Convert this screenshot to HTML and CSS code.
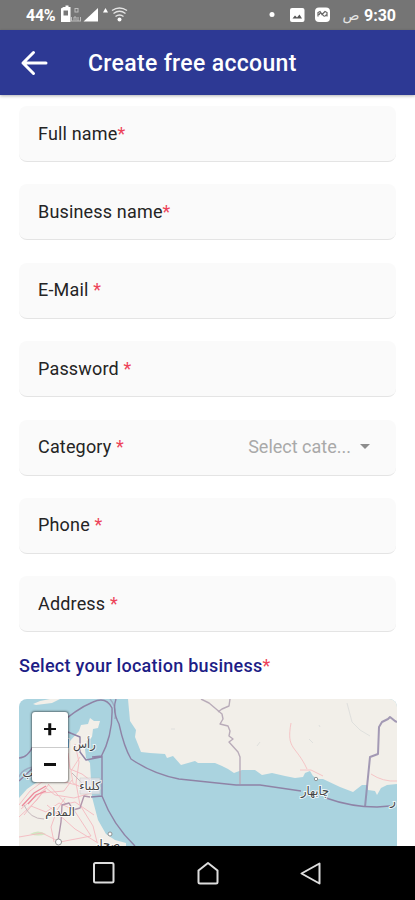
FILE: index.html
```html
<!DOCTYPE html>
<html lang="en">
<head>
<meta charset="utf-8">
<title>Create free account</title>
<link rel="stylesheet" href="styles.css">
</head>
<body>
<div class="screen">
  <div class="status">
    <span class="battery-text">44%</span>
    <svg class="status-left" viewBox="60 5 70 20" width="70" height="20">
      <path d="M63.500 7h2V5.500h3V7h2v15h-9.500V8.500z" fill="#fff"/><path d="M63.500 10.500h4.500v5h-4.500z" fill="#777"/>
      <g fill="none" stroke="#bdbdbd"><rect x="75" y="8.500" width="3" height="3.500"/><path d="M71.500 17v4M74 17v3.500M74 17h2v3.500M78 17v4M80.500 17v4M71 21h10"/></g>
      <path d="M98 8v13.500H83.500z" fill="#fff"/><path d="M105.500 8l2.500 4.500h-5z" fill="#fff"/>
      <g fill="none" stroke="#e4e4e4" stroke-width="1.400"><path d="M112 10.500q7.500-5 15 0M113.500 13.500q6-4.500 12 0M115.500 16.500q4-3 8 0"/></g><circle cx="119.500" cy="19.500" r="2" fill="#fff"/>
    </svg>
    <svg class="status-right" viewBox="268 5 64 20" width="64" height="20">
      <circle cx="272" cy="14.500" r="2.500" fill="#fff"/>
      <rect x="290" y="8" width="14.500" height="14" rx="2" fill="#fff"/><path d="M292.500 18.500l2.500-3 2 2 2.500-3 2.500 4z" fill="#555"/>
      <rect x="315" y="7.500" width="15" height="14.500" rx="4" fill="#fff"/><path d="M318 16.500v-4l2-1 2 3 3-3 2 1v4M319 15q1.500-4 3.500-.5t4 0" fill="none" stroke="#666" stroke-width="1.200"/>
    </svg>
    <span class="meridiem">ص</span>
    <span class="time">9:30</span>
  </div>
  <header class="appbar">
    <svg class="back" viewBox="0 0 28 26" width="28" height="26"><path d="M26 13H3M13.500 2.500L3 13l10.500 10.500" fill="none" stroke="#fff" stroke-width="3" stroke-linecap="round" stroke-linejoin="round"/></svg>
    <h1 class="title">Create free account</h1>
  </header>
  <main class="form">
    <div class="field"><span>Full name<b>*</b></span></div>
    <div class="field"><span>Business name<b>*</b></span></div>
    <div class="field"><span>E-Mail <b>*</b></span></div>
    <div class="field"><span>Password <b>*</b></span></div>
    <div class="field"><span>Category <b>*</b></span><span class="select">Select cate...<i class="caret"></i></span></div>
    <div class="field"><span>Phone <b>*</b></span></div>
    <div class="field"><span>Address <b>*</b></span></div>
    <h2 class="location">Select your location business<b>*</b></h2>
    <div class="map">
      <svg viewBox="19 699 378 147" width="378" height="147">
        <rect x="19" y="699" width="378" height="147" fill="#aad3df"/>
        <g fill="#f2efe9">
          <path d="M128 699L130 721 136 730 135 737 141 752 150 753 165 754 167 758 173 756 181 765 195 761 198 763 215 763 222 766 228 769 234 773 242 770 255 770 262 775 272 773 285 776 295 778 303 777 305 773 310 771 313 776 318 779 323 779 340 787 353 792 362 785 367 785 368 790 375 791 377 795 381 788 387 785 397 784V699z"/>
          <path d="M19 798L27 789 40 780 56 764 67 752 70 741 79 731 81 725 88 724 90 718 94 721 100 721 98 728 93 729 92 737 87 741 85 749 86 758 90 763 92 797 98 820 106 834 115 840 126 843V846H19z"/>
          <path d="M33 704l7-3 10-2h10l-8 4-16 2z"/>
        </g>
        <path d="M30 834q8-5 16 0-8 3-16 0z" fill="#d1e7c2"/>
        <g fill="none" stroke="#f4b9bf" stroke-width=".9">
          <path d="M19 805L30 791 42 782 58 780 76 785 91 790M19 817L37 800 49 784M21 809L46 788 55 795 74 798 91 793M24 815L42 793 64 791 72 780M31 806L46 812 59 803 74 810 91 836M47 805L65 820 75 829 98 843M48 784L66 804 75 802 94 815M68 753L70 769 82 774 90 780M75 744L79 762 76 783 80 805 93 826 97 842M19 837L42 833 60 842 91 836M65 798L57 810 51 827 54 842"/>
          <path d="M291 723C286 750 296 745 307 769M300 770h11l12 6M371 774q12 8 26 7M80 757L71 771 73 783 84 789" stroke="#f5bfc2"/>
          <path d="M22 806l12-13 12-7M28 804l8-9 10-4" stroke="#ed8b9c" stroke-width="1.300"/>
        </g>
        <path d="M24 805q6 14 20 14M72 773l12 12" fill="none" stroke="#c6b9bd"/>
        <g fill="none" stroke="#8f83a6" stroke-width="1.400" stroke-linejoin="round">
          <path d="M19 758Q28 758 34 744L55 728Q76 709 93 702 106 696 112 708 113 735 101 757L86 760 80 752V737L68 732M19 781l14-13M92 757l10-1v40l-11 1M102 796Q113 825 135 846M116 699Q112 711 119 724 124 747 131 759 153 774 179 779L236 785 260 785 301 791M326 798q25 9 51 9L390 806"/>
          <path d="M110 699q7 8 5 20M19 777q3-8 14-10" opacity=".5"/>
          <path d="M365 807l5-50 8-3 1-27 3-5 6-3 2-2 5 4 2 1" stroke-width="2" opacity=".8"/>
          <path d="M201 699L209 703 222 714 223 719 220 724 228 726 230 731 229 736 233 739 229 742 238 752 240 757V784M218 712l4-3 7-3 1-7" stroke="#b9acb9"/>
          <path d="M90 797L84 796 80 808 73 810 69 803 62 805 61 822 58 841" stroke="#b196ac"/>
          <path d="M347 703l5 19 8 8 10 6M309 739l4 4M319 725l1 2M171 729h4M260 742l-3 4" stroke="#dcdedb" stroke-width=".9"/>
        </g>
        <g fill="#fff" stroke="#888" stroke-width=".9"><circle cx="58.500" cy="842" r="3"/><circle cx="110" cy="834" r="2"/><circle cx="316" cy="779" r="1.700"/></g>
        <path d="M80 778h20v16h-20z" fill="#e9e5ea" opacity=".7" stroke="#bbb" stroke-width=".5"/>
        <g class="places">
          <text x="81" y="748">رأس ا</text>
          <text x="90" y="790">كلباء</text>
          <text x="60" y="816">المدام</text>
          <text x="28" y="777">ب</text>
          <text x="107" y="848">صحار</text>
          <text x="315" y="795">چابهار</text>
          <text x="393" y="805">ر</text>
        </g>
      </svg>
      <div class="zoom"><div class="zoom-btn"><i class="bar"></i><i class="bar up"></i></div><div class="zoom-btn"><i class="bar"></i></div></div>
    </div>
  </main>
  <nav class="nav">
    <svg viewBox="0 0 24 24" width="24" height="24"><rect x="2" y="2" width="19.500" height="19.500" rx="1.500"/></svg>
    <svg viewBox="0 0 24 24" width="24" height="24"><path d="M2.500 9.500L12 2l9.500 7.500V21q0 1.500-1.500 1.500H4Q2.500 22.500 2.500 21z"/></svg>
    <svg viewBox="0 0 24 24" width="24" height="24"><path d="M20.500 2.500v20L2.500 12.500z"/></svg>
  </nav>
</div>
</body>
</html>
```

FILE: styles.css
```css
* { box-sizing: border-box; }
body { margin: 0; background: #fff; font-family: Roboto, "DejaVu Sans", sans-serif; }
.screen { width: 415px; height: 900px; overflow: hidden; display: flex; flex-direction: column; }
.status { height: 30px; flex: none; background: #757575; color: #fff; display: flex; align-items: center; padding: 0 18px 0 26px; }
.battery-text { width: 34px; font-size: 16px; font-weight: 700; letter-spacing: -.3px; }
.status-left { flex: none; }
.status-right { margin-left: auto; }
.meridiem { width: 20px; margin-left: 9px; font-size: 14px; text-align: center; color: #e5e5e5; }
.time { width: 33px; margin-left: 3px; font-size: 16px; font-weight: 700; letter-spacing: 0; }
.appbar { height: 65px; flex: none; background: #2d3994; color: #fff; display: flex; align-items: center; padding-left: 20px; box-shadow: 0 1px 3px rgba(0,0,0,.3); z-index: 1; }
.back { flex: none; }
.title { margin: 2px 0 0 40px; font-size: 23px; line-height: 30px; font-weight: 500; letter-spacing: .33px; }
.form { flex: 1; min-height: 0; padding: 11px 19px 0; display: flex; flex-direction: column; overflow: hidden; }
.field { height: 56px; flex: none; margin-bottom: 22.4px; padding: 0 26px 1px 19px; border-radius: 8px; background: #fafafa; border-bottom: 1.5px solid #e4e4e4; display: flex; align-items: center; justify-content: space-between; font-size: 18px; letter-spacing: .17px; color: #242424; }
b { color: #ed4359; font-weight: 400; }
.select { color: #a9a9a9; display: flex; align-items: center; letter-spacing: 0; }
.caret { margin-left: 9px; border: 5.5px solid transparent; border-top-color: #8d8d8d; border-bottom: 0; }
.location { flex: none; margin: 0; height: 44px; line-height: 22px; font-size: 18px; font-weight: 500; letter-spacing: .27px; color: #1d1d86; }
.map { position: relative; width: 378px; height: 147px; flex: none; border-radius: 8px 8px 0 0; overflow: hidden; }
.map svg { display: block; }
.places { font-family: "DejaVu Sans", sans-serif; font-size: 11.5px; fill: #444; text-anchor: middle; paint-order: stroke; stroke: rgba(255,255,255,.75); stroke-width: 2px; }
.zoom { position: absolute; left: 13px; top: 13px; width: 36px; height: 70px; border-radius: 3px; background: #fff; box-shadow: 0 0 2px 1px rgba(0,0,0,.45); display: grid; grid-template-rows: 1fr 1fr; }
.zoom-btn { display: grid; place-items: center; }
.zoom-btn + .zoom-btn { border-top: 1px solid #ccc; }
.bar { grid-area: 1 / 1; width: 12px; height: 2.5px; background: #111; }
.up { transform: rotate(90deg); }
.nav { height: 54.5px; flex: none; background: #000; display: flex; align-items: center; justify-content: space-between; padding: 0 92px; }
.nav svg { fill: none; stroke: #ddd; stroke-width: 2; stroke-linejoin: round; }
```
